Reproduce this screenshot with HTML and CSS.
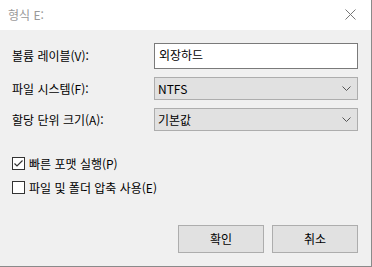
FILE: index.html
```html
<!DOCTYPE html>
<html lang="ko">
<head>
    <meta charset="UTF-8">
    <meta name="viewport" content="width=device-width, initial-scale=1.0">
    <link rel="stylesheet" href="styles.css">
    <title>형식 E:</title>
</head>
<body>
    <div class="dialog">
        <div class="titlebar">
            <span class="title">형식 E:</span>
            <svg class="close" width="11" height="11" viewBox="0 0 11 11">
                <path d="M0.5 0.5 L10.5 10.5 M10.5 0.5 L0.5 10.5" stroke="#777" stroke-width="1" fill="none"/>
            </svg>
        </div>

        <div class="form">
            <label class="label" for="volume">볼륨 레이블(V):</label>
            <div class="textbox" id="volume">외장하드</div>

            <label class="label">파일 시스템(F):</label>
            <div class="select">
                <span>NTFS</span>
                <svg class="chevron" width="9" height="5" viewBox="0 0 9 5">
                    <path d="M0.5 0.5 L4.5 4.5 L8.5 0.5" stroke="#555" stroke-width="1" fill="none"/>
                </svg>
            </div>

            <label class="label">할당 단위 크기(A):</label>
            <div class="select">
                <span>기본값</span>
                <svg class="chevron" width="9" height="5" viewBox="0 0 9 5">
                    <path d="M0.5 0.5 L4.5 4.5 L8.5 0.5" stroke="#555" stroke-width="1" fill="none"/>
                </svg>
            </div>
        </div>

        <div class="checks">
            <div class="check">
                <span class="box">
                    <svg width="11" height="11" viewBox="0 0 11 11">
                        <path d="M1.5 5.5 L4 8 L9.5 2.5" stroke="#333" stroke-width="1.2" fill="none"/>
                    </svg>
                </span>
                <span>빠른 포맷 실행(P)</span>
            </div>
            <div class="check">
                <span class="box"></span>
                <span>파일 및 폴더 압축 사용(E)</span>
            </div>
        </div>

        <div class="footer">
            <button class="btn">확인</button>
            <button class="btn">취소</button>
        </div>
    </div>
</body>
</html>
```

FILE: styles.css
```css
body {
    margin: 0;
    font-family: "Noto Sans CJK KR", "Noto Sans", sans-serif;
    font-size: 12px;
    color: #000;
    background: #f0f0f0;
}

.dialog {
    width: 371px;
    height: 266px;
    background: #f0f0f0;
    border-right: 1px solid #8a8a8a;
    border-bottom: 1px solid #8a8a8a;
}

.titlebar {
    height: 30px;
    background: #fff;
    display: flex;
    align-items: center;
    justify-content: space-between;
    padding: 0 15px 0 8px;
}

.title {
    color: #999;
    line-height: 16px;
}

.close {
    display: block;
    margin-top: -2px;
}

.form {
    display: grid;
    grid-template-columns: 142px 204px;
    grid-template-rows: 26px 23px 23px;
    row-gap: 8px;
    padding: 13px 0 0 12px;
    align-items: center;
}

.label {
    line-height: 16px;
}

.textbox {
    height: 26px;
    box-sizing: border-box;
    border: 1px solid #7a7a7a;
    background: #fff;
    padding: 0 4px;
    line-height: 22px;
}

.select {
    height: 23px;
    box-sizing: border-box;
    border: 1px solid #adadad;
    background: #e1e1e1;
    display: flex;
    align-items: center;
    justify-content: space-between;
    padding: 0 6px 0 3px;
    line-height: 16px;
}

.checks {
    display: flex;
    flex-direction: column;
    gap: 11px;
    padding: 26px 0 0 12px;
}

.check {
    display: flex;
    align-items: center;
    gap: 4px;
    height: 13px;
    line-height: 16px;
}

.box {
    width: 13px;
    height: 13px;
    box-sizing: border-box;
    border: 1px solid #333;
    background: #fff;
    display: flex;
    align-items: center;
    justify-content: center;
}

.box svg {
    display: block;
}

.footer {
    display: flex;
    justify-content: flex-end;
    gap: 8px;
    padding: 31px 13px 0 0;
}

.btn {
    width: 86px;
    height: 28px;
    border: 1px solid #adadad;
    background: #e1e1e1;
    font-family: inherit;
    font-size: 12px;
    color: #000;
    padding: 0;
    line-height: 16px;
}
```
